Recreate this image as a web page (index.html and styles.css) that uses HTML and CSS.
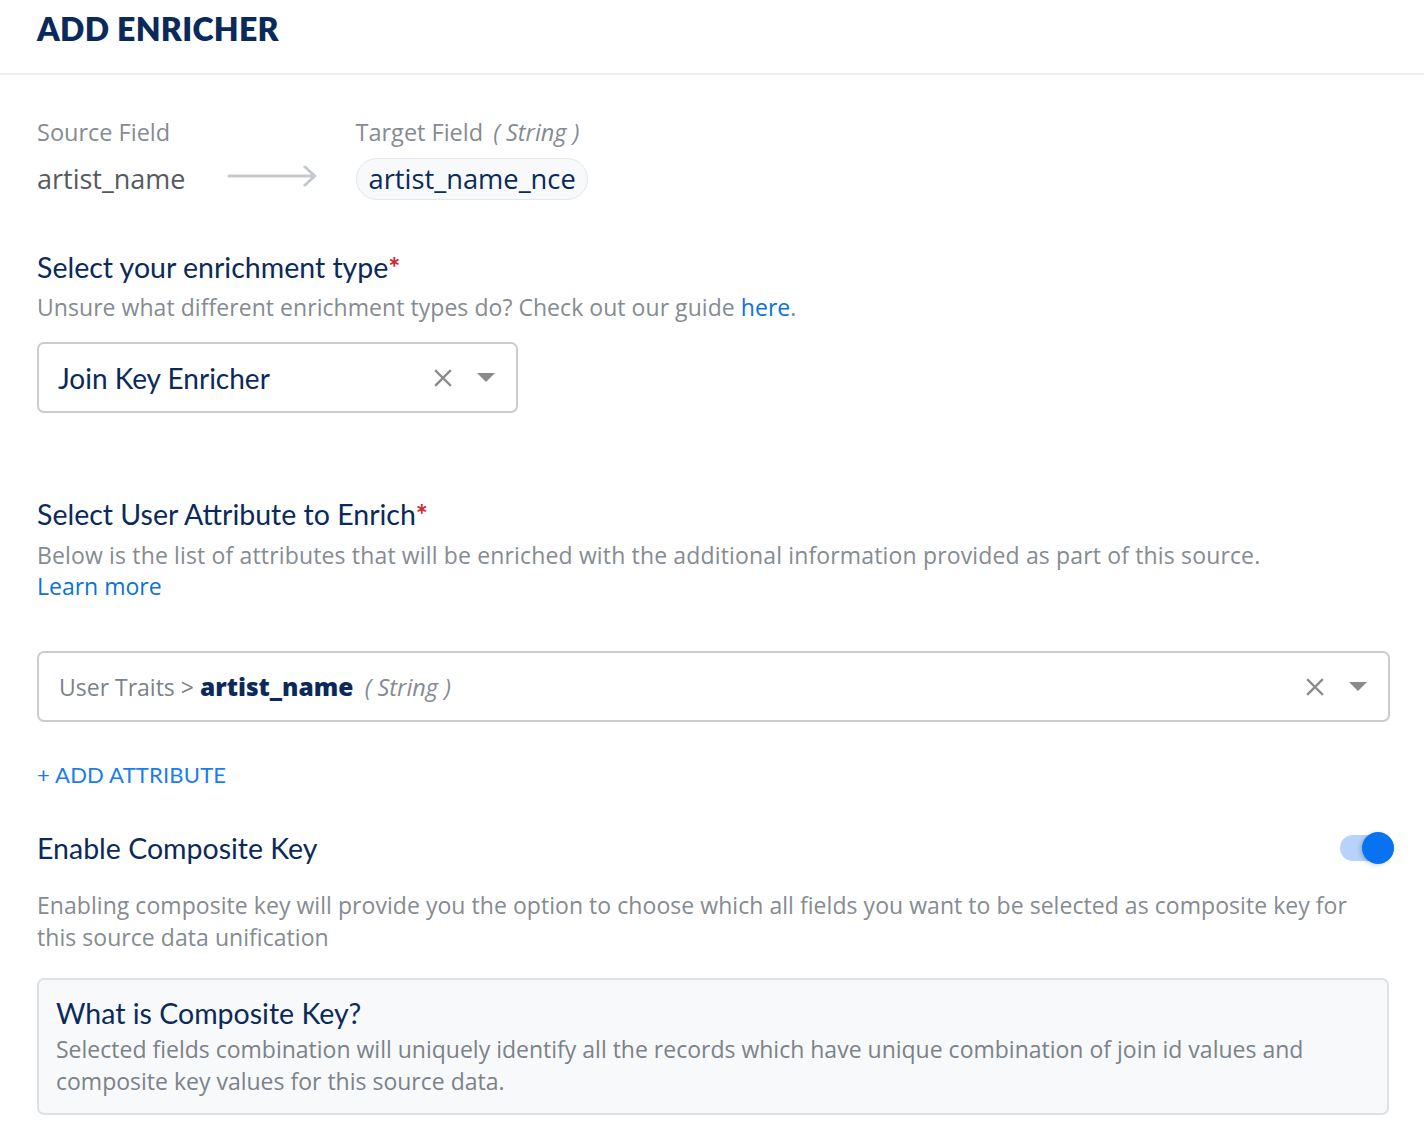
FILE: index.html
```html
<!DOCTYPE html>
<html>
<head>
<meta charset="utf-8">
<link rel="stylesheet" href="styles.css">
</head>
<body>
<header class="header">
  <h1 class="title">ADD ENRICHER</h1>
</header>
<main class="content">
  <section class="mapping">
    <div class="field">
      <div class="field-label">Source Field</div>
      <div class="field-value">artist_name</div>
    </div>
    <svg class="arrow" width="92" height="24" viewBox="0 0 92 24">
      <path d="M2 13 H88 M78 4 L88 13 L78 22" fill="none" stroke="#c5c9ce" stroke-width="3" stroke-linecap="round" stroke-linejoin="round"/>
    </svg>
    <div class="field">
      <div class="field-label">Target Field <span class="type">( String )</span></div>
      <div class="pill">artist_name_nce</div>
    </div>
  </section>

  <section class="block block-type">
    <h2 class="label">Select your enrichment type<span class="req">*</span></h2>
    <p class="help">Unsure what different enrichment types do? Check out our guide <a class="link">here</a>.</p>
    <div class="select select-small">
      <span class="select-value">Join Key Enricher</span>
      <span class="select-icons">
        <svg class="clear" width="20" height="20" viewBox="0 0 20 20"><path d="M3 3 L17 17 M17 3 L3 17" stroke="#8a8a8a" stroke-width="2.4" stroke-linecap="square"/></svg>
        <svg class="caret" width="20" height="12" viewBox="0 0 20 12"><path d="M1 1 H19 L10 10 Z" fill="#8a8a8a"/></svg>
      </span>
    </div>
  </section>

  <section class="block block-attr">
    <h2 class="label">Select User Attribute to Enrich<span class="req">*</span></h2>
    <p class="help help-tight">Below is the list of attributes that will be enriched with the additional information provided as part of this source.</p>
    <a class="link learn">Learn more</a>
    <div class="select select-wide">
      <span class="select-value"><span class="crumb">User Traits &gt; </span><strong class="attr">artist_name</strong> <span class="type">( String )</span></span>
      <span class="select-icons">
        <svg class="clear" width="20" height="20" viewBox="0 0 20 20"><path d="M3 3 L17 17 M17 3 L3 17" stroke="#8a8a8a" stroke-width="2.4" stroke-linecap="square"/></svg>
        <svg class="caret" width="20" height="12" viewBox="0 0 20 12"><path d="M1 1 H19 L10 10 Z" fill="#8a8a8a"/></svg>
      </span>
    </div>
    <a class="add-attr">+ ADD ATTRIBUTE</a>
  </section>

  <section class="block block-composite">
    <div class="composite-row">
      <h2 class="label">Enable Composite Key</h2>
      <span class="toggle"><span class="knob"></span></span>
    </div>
    <p class="help help-para">Enabling composite key will provide you the option to choose which all fields you want to be selected as composite key for this source data unification</p>
    <div class="info">
      <h3 class="info-title">What is Composite Key?</h3>
      <p class="info-text">Selected fields combination will uniquely identify all the records which have unique combination of join id values and composite key values for this source data.</p>
    </div>
  </section>
</main>
</body>
</html>
```

FILE: styles.css
```css
* { box-sizing: border-box; }
html, body { margin: 0; padding: 0; background: #fff; }
body { font-family: "Open Sans", "Lato", sans-serif; color: #0b2a5c; }

.header {
  height: 75px;
  border-bottom: 2px solid #eeeeee;
  padding: 0 37px;
  display: flex;
  align-items: center;
}
.title {
  margin: 0;
  margin-top: -16px;
  font-family: "Lato", sans-serif;
  font-size: 32px;
  font-weight: 800;
  color: #0b2a5c;
  letter-spacing: 0.3px;
}

.content { padding: 41px 35px 0 37px; }

.mapping { display: flex; align-items: flex-start; }
.field { display: flex; flex-direction: column; }
.field-label { font-size: 23.5px; color: #858b92; line-height: 32px; height: 32px; white-space: nowrap; }
.field-value { font-size: 27px; color: #555a61; line-height: 40px; margin-top: 11px; }
.type { font-style: italic; color: #858b92; margin-left: 4px; }
.arrow { margin: 47px 37px 0 41px; }
.pill {
  margin-top: 10px;
  height: 42px;
  border: 1px solid #e3e6ea;
  background: #f7f9fb;
  border-radius: 21px;
  padding: 0 11px 0 12px;
  font-size: 27.3px;
  line-height: 40px;
  color: #0b2a5c;
}

.block { display: flex; flex-direction: column; align-items: flex-start; }
.block-type { margin-top: 49px; }
.label {
  margin: 0;
  font-family: "Lato", sans-serif;
  font-size: 28.5px;
  font-weight: 400;
  line-height: 36px;
  color: #0b2a5c;
}
.req { color: #d0262c; font-weight: 700; }
.help { margin: 6px 0 0; font-size: 23px; line-height: 32px; color: #858b92; letter-spacing: 0.05px; }
.link { color: #0a72d8; cursor: pointer; }

.select {
  display: flex;
  align-items: center;
  justify-content: space-between;
  height: 71px;
  border: 2px solid #cccccc;
  border-radius: 7px;
  background: #fff;
}
.select-small { width: 481px; margin-top: 19px; padding: 0 20px 0 19px; }
.select-wide { width: 1353px; margin-top: 49px; padding: 0 20px 0 20px; }
.select-value { font-family: "Lato", sans-serif; font-size: 28px; color: #0b2a5c; }
.select-wide .select-value { font-family: "Open Sans", sans-serif; margin-top: -3px; }
.select-icons { display: flex; align-items: center; gap: 23px; }
.crumb { font-size: 23px; color: #7b828a; }
.attr { font-size: 24.5px; font-weight: 800; color: #0b2a5c; }
.select-wide .type { font-size: 23.5px; }

.block-attr { margin-top: 83px; }
.help-tight { margin-top: 7px; letter-spacing: 0.15px; }
.learn { font-size: 23px; line-height: 32px; margin-top: -1px; }

.add-attr {
  margin-top: 39px;
  font-family: "Lato", sans-serif;
  font-size: 22px;
  color: #1a7cf2;
  letter-spacing: 0.2px;
  cursor: pointer;
}

.block-composite { margin-top: 42px; align-items: stretch; }
.composite-row { display: flex; align-items: center; justify-content: space-between; }
.toggle {
  position: relative;
  width: 54px;
  height: 26px;
  margin-right: -5px;
  border-radius: 13px;
  background: #b8d3fa;
}
.knob {
  position: absolute;
  right: 0;
  top: -3px;
  width: 32px;
  height: 32px;
  border-radius: 50%;
  background: #0873f0;
  box-shadow: -2px 1px 4px rgba(0,0,0,0.18);
}
.help-para { margin-top: 23px; }

.info {
  margin-top: 25px;
  border: 2px solid #dde0e5;
  border-radius: 7px;
  background: #f8f9fb;
  padding: 15px 17px 16px;
}
.info-title {
  margin: 0 0 2px;
  font-family: "Lato", sans-serif;
  font-size: 28.5px;
  font-weight: 400;
  line-height: 36px;
  color: #0b2a5c;
}
.info-text { margin: 0; font-size: 23px; line-height: 32px; color: #7b828a; }
```
